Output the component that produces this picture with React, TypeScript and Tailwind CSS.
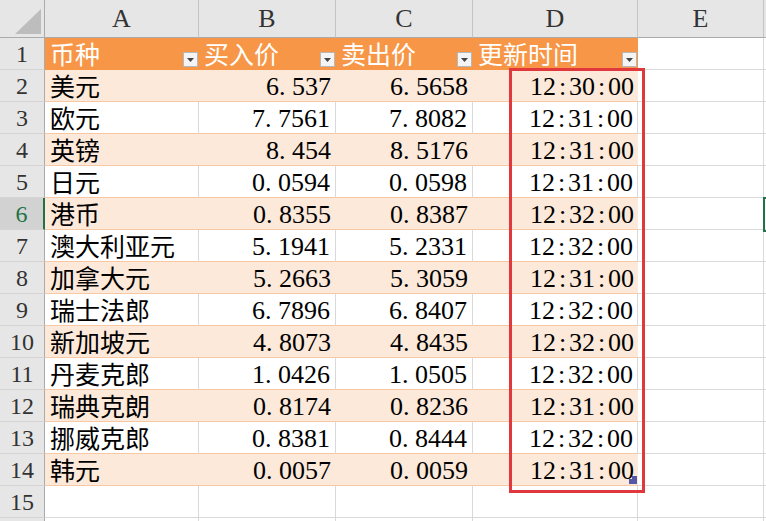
import React from "react";

const rows: [string, string, string, string][] = [
  ["美元", "6.537", "6.5658", "12:30:00"],
  ["欧元", "7.7561", "7.8082", "12:31:00"],
  ["英镑", "8.454", "8.5176", "12:31:00"],
  ["日元", "0.0594", "0.0598", "12:31:00"],
  ["港币", "0.8355", "0.8387", "12:32:00"],
  ["澳大利亚元", "5.1941", "5.2331", "12:32:00"],
  ["加拿大元", "5.2663", "5.3059", "12:31:00"],
  ["瑞士法郎", "6.7896", "6.8407", "12:32:00"],
  ["新加坡元", "4.8073", "4.8435", "12:32:00"],
  ["丹麦克郎", "1.0426", "1.0505", "12:32:00"],
  ["瑞典克朗", "0.8174", "0.8236", "12:31:00"],
  ["挪威克郎", "0.8381", "0.8444", "12:32:00"],
  ["韩元", "0.0057", "0.0059", "12:31:00"],
];

const serif = "font-['Liberation_Serif',serif]";
const cjk = "font-['Noto_Sans_CJK_SC',sans-serif]";

// SimSun-like half-width punctuation: every glyph takes the same advance
function Num({ v }: { v: string }) {
  return (
    <span className={`${serif} text-[26px] leading-none text-black`}>
      {v.split("").map((ch, i) =>
        ch === "." ? (
          <span key={i} className="inline-block w-[13px] text-left">.</span>
        ) : ch === ":" ? (
          <span key={i} className="inline-block w-[13px] text-center">:</span>
        ) : (
          <span key={i}>{ch}</span>
        )
      )}
    </span>
  );
}

function Dropdown() {
  return (
    <div className="absolute right-[1px] bottom-[2px] w-[15px] h-[15px] bg-[#F4F4F4] border border-[#B7B7B7] flex items-center justify-center">
      <svg width="7" height="4" viewBox="0 0 7 4">
        <polygon points="0,0 7,0 3.5,4" fill="#444" />
      </svg>
    </div>
  );
}

function RowHead({ n, selected }: { n?: number; selected?: boolean }) {
  return (
    <div
      className={`h-[32px] flex items-end justify-center pb-[3px] border-b border-[#D4D4D4] ${serif} text-[24px] leading-none ${
        selected
          ? "bg-[#D2D2D2] text-[#217346] border-r-2 border-r-[#217346]"
          : "bg-[#E6E6E6] text-[#333] border-r border-r-[#ABABAB]"
      }`}
    >
      {n}
    </div>
  );
}

function Blank({ last }: { last?: boolean }) {
  return <div className={`h-[32px] border-b border-[#D9D9D9] ${last ? "" : "border-r"}`} />;
}

export default function App() {
  const cols = ["A", "B", "C", "D", "E"];
  return (
    <div className="w-[766px] h-[521px] overflow-hidden bg-white relative">
      <div className="grid grid-cols-[45px_154px_137px_137px_165px_126px_1fr]">
        {/* column headers */}
        <div className="h-[38px] bg-[#E6E6E6] border-r border-b border-[#ABABAB] flex items-end justify-end p-[3px]">
          <svg width="26" height="25" viewBox="0 0 26 25">
            <polygon points="26,0 26,25 0,25" fill="#BDBDBD" />
          </svg>
        </div>
        {cols.map((c) => (
          <div
            key={c}
            className={`h-[38px] bg-[#E6E6E6] border-r border-r-[#C4C4C4] border-b border-b-[#ABABAB] flex items-center justify-center ${serif} text-[26px] text-[#333]`}
          >
            {c}
          </div>
        ))}
        <div className="h-[38px] bg-[#E6E6E6] border-b border-[#ABABAB]" />

        {/* row 1: table header */}
        <RowHead n={1} />
        {["币种", "买入价", "卖出价", "更新时间"].map((h) => (
          <div
            key={h}
            className={`relative h-[32px] bg-[#F79646] border-b border-[#F79646] flex items-end pl-[5px] pb-[3px] ${cjk} text-[25px] leading-none text-white`}
          >
            {h}
            <Dropdown />
          </div>
        ))}
        <Blank />
        <Blank last />

        {/* data rows */}
        {rows.map((r, i) => {
          const band = i % 2 === 0;
          const fill = band ? "bg-[#FDE9DA]" : "bg-white";
          const vline = band ? "" : "border-r border-r-[#D9D9D9]";
          const base = `h-[32px] ${fill} border-b border-b-[#F7C8A4] ${vline} flex items-end`;
          return (
            <React.Fragment key={r[0]}>
              <RowHead n={i + 2} selected={i + 2 === 6} />
              <div className={`${base} pb-[3px] pl-[5px] ${cjk} text-[25px] leading-none text-black`}>{r[0]}</div>
              <div className={`${base} pb-[1px] justify-end pr-[5px]`}>
                <Num v={r[1]} />
              </div>
              <div className={`${base} pb-[1px] justify-end pr-[5px]`}>
                <Num v={r[2]} />
              </div>
              <div className={`${base} pb-[1px] relative justify-end pr-[4px]`}>
                <Num v={r[3]} />
                {i === rows.length - 1 && (
                  <svg className="absolute right-[1px] bottom-[1px]" width="8" height="8" viewBox="0 0 8 8">
                    <polygon points="8,0 8,8 0,8 0,3 3,3 3,0" fill="#5757A8" />
                  </svg>
                )}
              </div>
              <Blank />
              <Blank last />
            </React.Fragment>
          );
        })}

        {/* row 15 and the edge of row 16 */}
        {[15, undefined].map((n, k) => (
          <React.Fragment key={k}>
            <RowHead n={n} />
            <Blank />
            <Blank />
            <Blank />
            <Blank />
            <Blank />
            <Blank last />
          </React.Fragment>
        ))}
      </div>

      {/* red highlight around column D values */}
      <div className="absolute left-[509px] top-[68px] w-[136px] h-[425px] border-[3px] border-[#E0383D] pointer-events-none" />

      {/* active cell edge (F6) */}
      <div className="absolute left-[763px] top-[197px] w-[6px] h-[35px] border-l-2 border-t-2 border-b-2 border-[#217346]" />
    </div>
  );
}
